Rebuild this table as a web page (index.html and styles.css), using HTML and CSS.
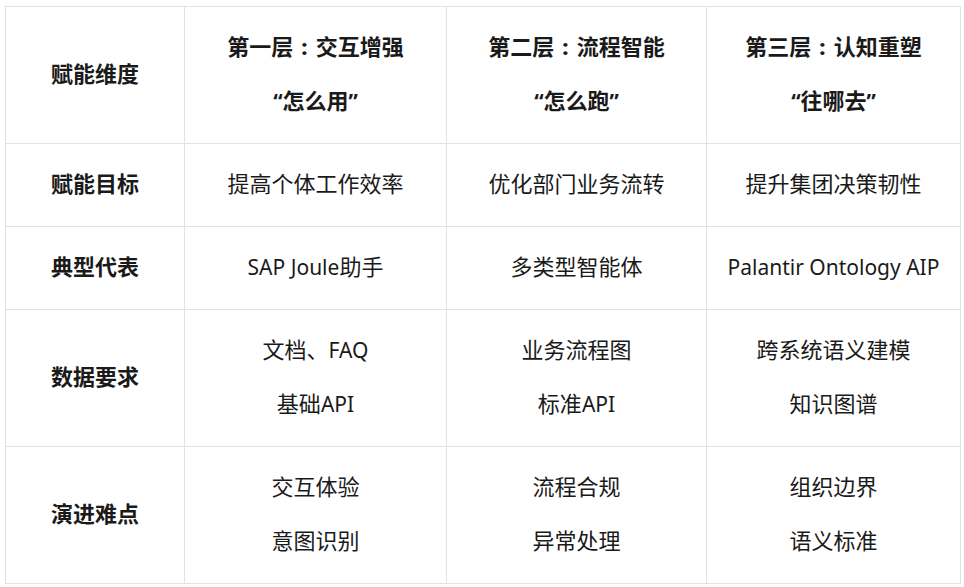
FILE: index.html
```html
<!DOCTYPE html>
<html lang="zh-CN">
<head>
<meta charset="utf-8">
<title>赋能维度</title>
<link rel="stylesheet" href="styles.css">
</head>
<body>
<table class="grid">
  <colgroup>
    <col class="c1"><col class="c2"><col class="c3"><col class="c4">
  </colgroup>
  <tr class="head">
    <th><span class="ln">赋能维度</span></th>
    <th><span class="ln">第一层<span class="colon">:</span>交互增强</span><span class="ln"><span class="q">“</span>怎么用<span class="q">”</span></span></th>
    <th><span class="ln">第二层<span class="colon">:</span>流程智能</span><span class="ln"><span class="q">“</span>怎么跑<span class="q">”</span></span></th>
    <th><span class="ln">第三层<span class="colon">:</span>认知重塑</span><span class="ln"><span class="q">“</span>往哪去<span class="q">”</span></span></th>
  </tr>
  <tr>
    <th><span class="ln">赋能目标</span></th>
    <td><span class="ln">提高个体工作效率</span></td>
    <td><span class="ln">优化部门业务流转</span></td>
    <td><span class="ln">提升集团决策韧性</span></td>
  </tr>
  <tr>
    <th><span class="ln">典型代表</span></th>
    <td><span class="ln"><span class="lat">SAP Joule</span>助手</span></td>
    <td><span class="ln">多类型智能体</span></td>
    <td><span class="ln"><span class="lat">Palantir Ontology AIP</span></span></td>
  </tr>
  <tr>
    <th><span class="ln">数据要求</span></th>
    <td><span class="ln">文档、<span class="lat">FAQ</span></span><span class="ln">基础<span class="lat">API</span></span></td>
    <td><span class="ln">业务流程图</span><span class="ln">标准<span class="lat">API</span></span></td>
    <td><span class="ln">跨系统语义建模</span><span class="ln">知识图谱</span></td>
  </tr>
  <tr>
    <th><span class="ln">演进难点</span></th>
    <td><span class="ln">交互体验</span><span class="ln">意图识别</span></td>
    <td><span class="ln">流程合规</span><span class="ln">异常处理</span></td>
    <td><span class="ln">组织边界</span><span class="ln">语义标准</span></td>
  </tr>
</table>
</body>
</html>
```
FILE: styles.css
```css
html, body {
  margin: 0;
  padding: 0;
  background: #ffffff;
}
body {
  padding: 6px 0 0 5px;
  font-family: "Noto Sans", "Noto Sans CJK SC", sans-serif;
  color: #1a1a1a;
}
.grid {
  border-collapse: collapse;
  table-layout: fixed;
  width: 955px;
}
.c1 { width: 179px; }
.c2 { width: 262px; }
.c3 { width: 260px; }
.c4 { width: 254px; }
.grid th,
.grid td {
  border: 1px solid #e2e2e2;
  padding: 12px 0 16px;
  text-align: center;
  vertical-align: middle;
  font-size: 22px;
  line-height: 54px;
}
.grid th {
  font-weight: 700;
}
.grid td {
  font-weight: 400;
}
.ln {
  display: block;
  height: 54px;
  line-height: 54px;
  white-space: nowrap;
}
.lat,
.q,
.colon {
  line-height: 1;
}
.lat {
  font-size: 21px;
}
.colon {
  display: inline-block;
  margin: 0 8px;
  font-weight: 800;
}
.q {
  font-size: 21px;
}
```
